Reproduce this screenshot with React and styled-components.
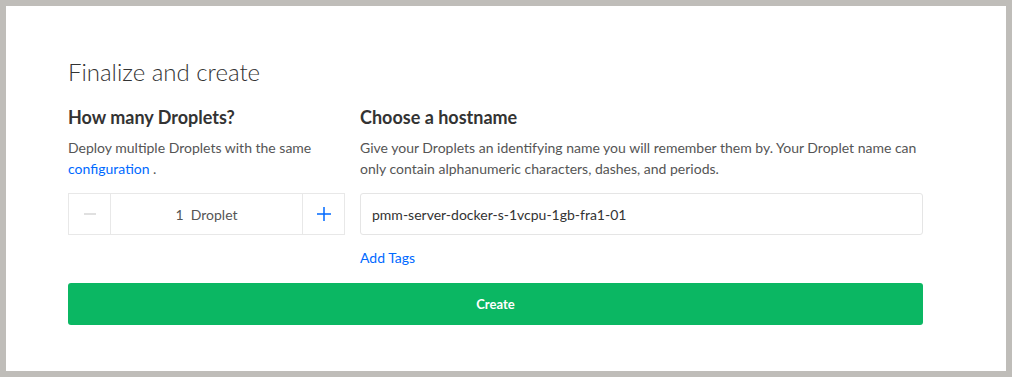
import React, {useState} from 'react';
import styled, {createGlobalStyle} from 'styled-components';

const GlobalStyle = createGlobalStyle`
  html, body {
    margin: 0;
    padding: 0;
    background: #bfbdb9;
  }
  body {
    font-family: Lato, "Open Sans", sans-serif;
    color: #444;
  }
`

const Frame = styled.div`
  padding: 6px;
  height: 377px;
  box-sizing: border-box;
`
const Panel = styled.div`
  background: #fff;
  height: 100%;
  box-sizing: border-box;
  padding: 52px 0 0 62px;
`
const Title = styled.h2`
  margin: 0 0 20px;
  font-size: 24px;
  font-weight: 300;
  color: #333;
  line-height: 28px;
`
const Columns = styled.div`
  display: flex;
  gap: 15px;
  width: 855px;
`
const Column = styled.div`
  width: ${props => props.width}px;
  display: flex;
  flex-direction: column;
`
const Heading = styled.h3`
  margin: 0 0 9px;
  font-size: 18px;
  font-weight: 700;
  color: #333;
  line-height: 22px;
`
const Text = styled.p`
  margin: 0 0 14px;
  font-size: 14px;
  line-height: 21px;
  color: #555;
`
const Link = styled.a`
  color: #0069ff;
  text-decoration: none;
  cursor: pointer;
`
const Stepper = styled.div`
  display: flex;
  height: 42px;
  border: 1px solid #e8e8e8;
  box-sizing: border-box;
`
const StepButton = styled.button`
  width: 42px;
  border: none;
  background: #fff;
  display: flex;
  align-items: center;
  justify-content: center;
  padding: 0;
  cursor: pointer;
  border-${props => props.side}: 1px solid #e8e8e8;
`
const Count = styled.div`
  flex: 1;
  display: flex;
  align-items: center;
  justify-content: center;
  font-size: 14px;
  color: #555;
`
const Input = styled.input`
  height: 42px;
  box-sizing: border-box;
  border: 1px solid #e5e5e5;
  border-radius: 3px;
  padding: 0 11px;
  font-family: inherit;
  font-size: 14px;
  color: #333;
  outline: none;
`
const TagsLink = styled(Link)`
  margin-top: 14px;
  font-size: 14px;
  line-height: 18px;
`
const CreateButton = styled.button`
  margin-top: 16px;
  width: 855px;
  height: 42px;
  border: none;
  border-radius: 3px;
  background: #0bb763;
  color: #fff;
  font-family: inherit;
  font-size: 13px;
  font-weight: 700;
  cursor: pointer;
`

const Minus = () => (
    <svg width="14" height="14" viewBox="0 0 14 14">
        <path d="M1 7h12" stroke="#d0d0d0" strokeWidth="1.3"/>
    </svg>
)
const Plus = () => (
    <svg width="14" height="14" viewBox="0 0 14 14">
        <path d="M0 7h14M7 0v14" stroke="#0069ff" strokeWidth="1.5"/>
    </svg>
)

const App = () => {
    const [count, setCount] = useState(1);
    const [hostname, setHostname] = useState('pmm-server-docker-s-1vcpu-1gb-fra1-01');
    return (
        <Frame>
            <GlobalStyle/>
            <Panel>
                <Title>Finalize and create</Title>
                <Columns>
                    <Column width={277}>
                        <Heading>How many Droplets?</Heading>
                        <Text>Deploy multiple Droplets with the same <Link>configuration</Link> .</Text>
                        <Stepper>
                            <StepButton side="right" onClick={() => setCount(c => c > 1 ? c - 1 : c)}><Minus/></StepButton>
                            <Count>{count}&nbsp; Droplet{count > 1 ? 's' : ''}</Count>
                            <StepButton side="left" onClick={() => setCount(c => c + 1)}><Plus/></StepButton>
                        </Stepper>
                    </Column>
                    <Column width={563}>
                        <Heading>Choose a hostname</Heading>
                        <Text>Give your Droplets an identifying name you will remember them by. Your Droplet name can only contain alphanumeric characters, dashes, and periods.</Text>
                        <Input value={hostname} onChange={e => setHostname(e.target.value)}/>
                        <TagsLink>Add Tags</TagsLink>
                    </Column>
                </Columns>
                <CreateButton>Create</CreateButton>
            </Panel>
        </Frame>
    );
};

export default App;
